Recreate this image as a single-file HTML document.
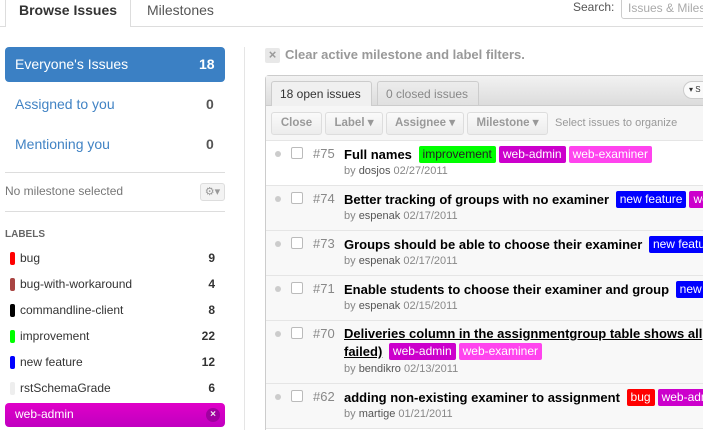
<!DOCTYPE html>
<html><head><meta charset="utf-8"><style>
*{box-sizing:border-box;margin:0;padding:0}
html,body{width:703px;height:430px;overflow:hidden}
body{background:#fff;font-family:"Liberation Sans",Helvetica,Arial,sans-serif;position:relative;color:#333}
#w{position:absolute;left:0;top:0;width:703px;height:430px;overflow:hidden}
.a{position:absolute;white-space:nowrap}
.tabbar{position:absolute;left:0;top:26px;width:703px;border-top:1px solid #ddd}
.tab{position:absolute;left:5px;top:-1px;width:126px;height:28px;border:1px solid #ddd;border-bottom:none;border-top:none;background:#fff}
.lab{position:absolute;left:10px;width:5px;height:13px;border-radius:2px}
.lt{position:absolute;left:20px;font-size:12px;color:#333}
.lc{position:absolute;right:488px;font-size:12px;font-weight:bold;color:#333}
.btn{position:absolute;top:112px;height:23px;border:1px solid #ddd;border-radius:3px;background:linear-gradient(#fafafa,#ececec);font-size:11.5px;font-weight:bold;color:#999;text-align:center;line-height:21px}
.row{position:absolute;left:266px;width:437px;border-top:1px solid #e5e5e5;background:#f8f8f8}
.dot{position:absolute;left:9px;top:10px;width:6px;height:6px;border-radius:50%;background:#ccc}
.cb{position:absolute;left:25px;top:6px;width:12px;height:12px;border:1px solid #bbb;border-radius:2px;background:#fff}
.num{position:absolute;left:47px;top:5px;font-size:13px;color:#888}
.ti{position:absolute;left:78px;top:5px;font-size:13px;font-weight:bold;color:#000;white-space:nowrap}
.by{position:absolute;left:78px;top:24px;font-size:11px;color:#888;white-space:nowrap}
.by b{font-weight:normal;color:#555}
.tg{display:inline-block;font-size:12px;font-weight:normal;color:#fff;padding:0 4px;height:17px;line-height:17px;border-radius:2px;margin-left:3px;vertical-align:1px}
</style></head><body><div id="w">
<div class="tabbar"></div>
<div class="tab"></div>
<div class="a" style="left:19px;top:2px;font-size:14px;font-weight:bold;color:#333">Browse Issues</div>
<div class="a" style="left:147px;top:2px;font-size:14px;color:#555">Milestones</div>
<div class="a" style="left:573px;top:0px;font-size:12px;color:#555">Search:</div>
<div class="a" style="left:621px;top:-4px;width:90px;height:23px;border:1px solid #ccc;border-radius:3px;font-size:12px;color:#aaa;padding:4px 0 0 6px">Issues &amp; Milestones</div>

<div class="a" style="left:5px;top:47px;width:220px;height:35px;background:#3b80c4;border-radius:4px"></div>
<div class="a" style="left:15px;top:56px;font-size:14px;color:#fff">Everyone's Issues</div>
<div class="a" style="left:199px;top:56px;font-size:14px;font-weight:bold;color:#fff">18</div>
<div class="a" style="left:15px;top:96px;font-size:14px;color:#4183c4">Assigned to you</div>
<div class="a" style="left:206px;top:96px;font-size:14px;font-weight:bold;color:#555">0</div>
<div class="a" style="left:15px;top:136px;font-size:14px;color:#4183c4">Mentioning you</div>
<div class="a" style="left:206px;top:136px;font-size:14px;font-weight:bold;color:#555">0</div>
<div class="a" style="left:5px;top:172px;width:220px;border-top:1px solid #ddd"></div>
<div class="a" style="left:5px;top:184px;font-size:12px;color:#777">No milestone selected</div>
<div class="a" style="left:200px;top:183px;width:25px;height:18px;border:1px solid #ddd;border-radius:3px;background:#f3f3f3;font-size:11px;color:#999;text-align:center;line-height:16px">⚙▾</div>
<div class="a" style="left:5px;top:211px;width:220px;border-top:1px solid #ddd"></div>
<div class="a" style="left:5px;top:229px;font-size:10px;font-weight:bold;color:#666">LABELS</div>

<div class="lab" style="top:252px;background:#f00"></div><div class="lt" style="top:251px">bug</div><div class="lc" style="top:251px">9</div>
<div class="lab" style="top:278px;background:#a94442"></div><div class="lt" style="top:277px">bug-with-workaround</div><div class="lc" style="top:277px">4</div>
<div class="lab" style="top:304px;background:#000"></div><div class="lt" style="top:303px">commandline-client</div><div class="lc" style="top:303px">8</div>
<div class="lab" style="top:330px;background:#0f0"></div><div class="lt" style="top:329px">improvement</div><div class="lc" style="top:329px">22</div>
<div class="lab" style="top:356px;background:#00f"></div><div class="lt" style="top:355px">new feature</div><div class="lc" style="top:355px">12</div>
<div class="lab" style="top:382px;background:#eee"></div><div class="lt" style="top:381px">rstSchemaGrade</div><div class="lc" style="top:381px">6</div>
<div class="a" style="left:5px;top:403px;width:220px;height:24px;background:linear-gradient(#e000c8,#c000c0);border-radius:4px"></div>
<div class="a" style="left:15px;top:407px;font-size:12px;color:#fff">web-admin</div>
<div class="a" style="left:206px;top:408px;width:14px;height:14px;border-radius:50%;background:#a000a0;color:#eee;font-size:10px;font-weight:bold;text-align:center;line-height:14px">×</div>

<div class="a" style="left:244px;top:47px;height:383px;border-left:1px solid #e5e5e5"></div>

<div class="a" style="left:265px;top:48px;width:15px;height:15px;background:#e8e8e8;border-radius:2px;color:#999;font-size:13px;font-weight:bold;text-align:center;line-height:14px">×</div>
<div class="a" style="left:285px;top:47px;font-size:13px;font-weight:bold;color:#999">Clear active milestone and label filters.</div>

<div class="a" style="left:265px;top:75px;width:450px;height:360px;border:1px solid #ccc;border-radius:4px;background:#fff"></div>
<div class="a" style="left:266px;top:76px;width:440px;height:30px;background:linear-gradient(#f2f2f2,#dcdcdc);border-bottom:1px solid #ccc"></div>
<div class="a" style="left:271px;top:81px;width:101px;height:25px;background:#f0f0f0;border:1px solid #ccc;border-bottom:none;border-radius:3px 3px 0 0;font-size:12px;color:#333;padding:5px 0 0 8px">18 open issues</div>
<div class="a" style="left:377px;top:81px;width:102px;height:24px;background:linear-gradient(#ececec,#e0e0e0);border:1px solid #ccc;border-bottom:none;border-radius:3px 3px 0 0;font-size:12px;color:#888;padding:5px 0 0 8px">0 closed issues</div>
<div class="a" style="left:683px;top:81px;width:30px;height:18px;border:1px solid #ccc;border-radius:9px;background:#fafafa;font-size:8px;padding:3px 0 0 5px;color:#333">▾ S</div>
<div class="a" style="left:266px;top:106px;width:440px;height:34px;background:#f6f6f6"></div>
<div class="btn" style="left:271px;width:51px">Close</div>
<div class="btn" style="left:325px;width:58px">Label ▾</div>
<div class="btn" style="left:386px;width:78px">Assignee ▾</div>
<div class="btn" style="left:467px;width:81px">Milestone ▾</div>
<div class="a" style="left:555px;top:117px;font-size:11px;color:#999">Select issues to organize</div>

<div class="row" style="top:140px;height:45px;background:#fff"><div class="dot"></div><div class="cb"></div><div class="num">#75</div><div class="ti">Full names <span class="tg" style="background:#0f0;color:#222">improvement</span><span class="tg" style="background:#c0c">web-admin</span><span class="tg" style="background:#f4e">web-examiner</span></div><div class="by">by <b>dosjos</b> 02/27/2011</div></div>
<div class="row" style="top:185px;height:45px"><div class="dot"></div><div class="cb"></div><div class="num">#74</div><div class="ti">Better tracking of groups with no examiner <span class="tg" style="background:#00f">new feature</span><span class="tg" style="background:#c0c">web-admin</span></div><div class="by">by <b>espenak</b> 02/17/2011</div></div>
<div class="row" style="top:230px;height:45px"><div class="dot"></div><div class="cb"></div><div class="num">#73</div><div class="ti">Groups should be able to choose their examiner <span class="tg" style="background:#00f">new feature</span></div><div class="by">by <b>espenak</b> 02/17/2011</div></div>
<div class="row" style="top:275px;height:45px"><div class="dot"></div><div class="cb"></div><div class="num">#71</div><div class="ti">Enable students to choose their examiner and group <span class="tg" style="background:#00f">new feature</span></div><div class="by">by <b>espenak</b> 02/15/2011</div></div>
<div class="row" style="top:320px;height:63px"><div class="dot"></div><div class="cb"></div><div class="num">#70</div><div class="ti" style="line-height:18px;top:4px"><u>Deliveries column in the assignmentgroup table shows all</u><br><u>failed)</u> <span class="tg" style="background:#c0c">web-admin</span><span class="tg" style="background:#f4e">web-examiner</span></div><div class="by" style="top:42px">by <b>bendikro</b> 02/13/2011</div></div>
<div class="row" style="top:383px;height:45px"><div class="dot"></div><div class="cb"></div><div class="num">#62</div><div class="ti">adding non-existing examiner to assignment <span class="tg" style="background:#f00">bug</span><span class="tg" style="background:#c0c">web-admin</span></div><div class="by">by <b>martige</b> 01/21/2011</div></div>
<div class="a" style="left:266px;top:428px;width:437px;border-top:1px solid #e5e5e5"></div>
</div></body></html>
